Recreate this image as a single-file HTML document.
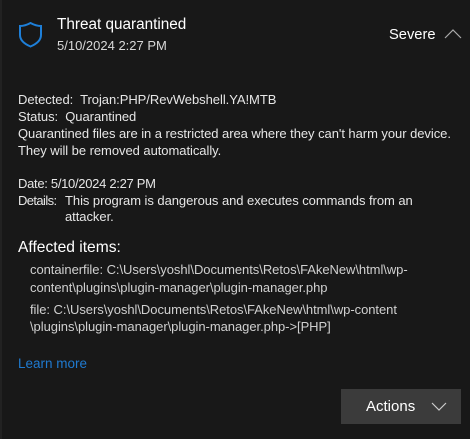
<!DOCTYPE html>
<html><head><meta charset="utf-8"><style>
html,body{margin:0;padding:0;width:470px;height:439px;background:#181818;overflow:hidden;font-family:"Liberation Sans",sans-serif;color:#e6e6e6}
.l{position:absolute;white-space:nowrap;font-size:13px;letter-spacing:-0.05px;line-height:15px}
.s{color:#d0d0d0}
</style></head><body>
<div style="position:absolute;left:0;top:0;width:2px;height:439px;background:#222"></div>
<svg style="position:absolute;left:18px;top:22px" width="26" height="26" viewBox="0 0 26 26"><path d="M2 4 Q7 4 12.5 1 Q18 4 23 4 L23 13 Q23 20 12.5 24.5 Q2 20 2 13 Z" fill="none" stroke="#1e7fd8" stroke-width="2"/></svg>
<div class="l" style="left:57px;top:16px;font-size:15.3px;color:#fff;letter-spacing:0;line-height:18px">Threat quarantined</div>
<div class="l" style="left:57px;top:38px;font-size:13px;color:#d8d8d8;letter-spacing:0">5/10/2024 2:27 PM</div>
<div class="l" style="left:389px;top:26px;font-size:14.7px;color:#fff;line-height:18px;letter-spacing:0">Severe</div>
<svg style="position:absolute;left:444px;top:28px" width="18" height="11" viewBox="0 0 18 11"><path d="M1 10 L9 2 L17 10" fill="none" stroke="#aaa" stroke-width="1.2"/></svg>
<div class="l" style="left:18px;top:92px">Detected:&nbsp; Trojan:PHP/RevWebshell.YA!MTB</div>
<div class="l" style="left:18px;top:109px">Status:&nbsp; Quarantined</div>
<div class="l" style="left:18px;top:126px">Quarantined files are in a restricted area where they can't harm your device.</div>
<div class="l" style="left:18px;top:143px">They will be removed automatically.</div>
<div class="l" style="left:18px;top:176px;letter-spacing:-0.3px">Date:&nbsp;5/10/2024 2:27 PM</div>
<div class="l" style="left:18px;top:193px;letter-spacing:-0.6px">Details:</div>
<div class="l" style="left:65px;top:193px">This program is dangerous and executes commands from an</div>
<div class="l" style="left:65px;top:209px">attacker.</div>
<div class="l" style="left:18px;top:239px;font-size:15.6px;color:#fff;line-height:18px;letter-spacing:0">Affected items:</div>
<div class="l s" style="left:30px;top:262px">containerfile: C:\Users\yoshl\Documents\Retos\FAkeNew\html\wp-</div>
<div class="l s" style="left:30px;top:280px">content\plugins\plugin-manager\plugin-manager.php</div>
<div class="l s" style="left:30px;top:302px">file: C:\Users\yoshl\Documents\Retos\FAkeNew\html\wp-content</div>
<div class="l s" style="left:30px;top:319px">\plugins\plugin-manager\plugin-manager.php-&gt;[PHP]</div>
<div class="l" style="left:18px;top:356px;font-size:13.5px;color:#1f7ad0;letter-spacing:0">Learn more</div>
<div style="position:absolute;left:341px;top:389px;width:120px;height:35px;background:#3b3b3b"></div>
<div class="l" style="left:366px;top:398px;font-size:15px;color:#fff;line-height:18px;letter-spacing:0">Actions</div>
<svg style="position:absolute;left:431px;top:402px" width="16" height="10" viewBox="0 0 16 10"><path d="M1 1 L8 8 L15 1" fill="none" stroke="#ccc" stroke-width="1.2"/></svg>
</body></html>
